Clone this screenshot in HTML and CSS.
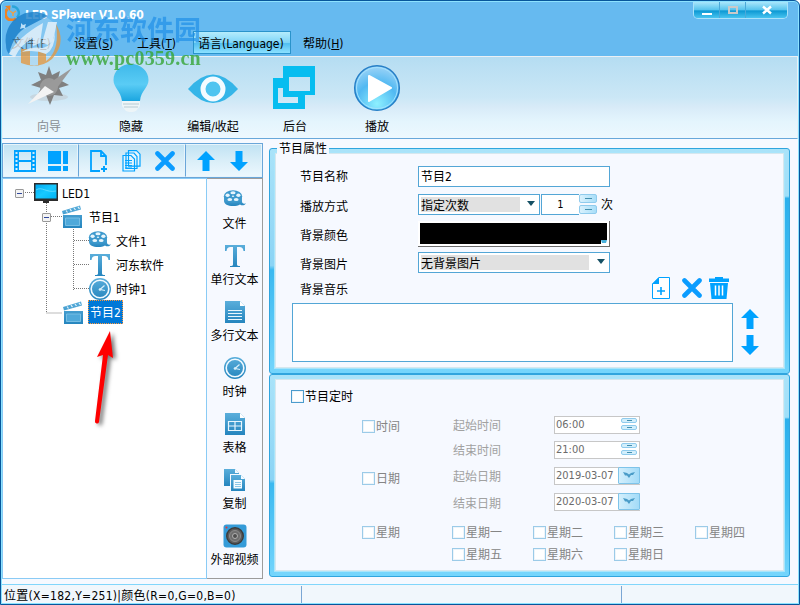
FILE: index.html
```
<!DOCTYPE html>
<html lang="zh-CN">
  <head>
    <meta charset="UTF-8"/>
    <meta name="viewport" content="width=device-width, initial-scale=1.0">
    <title>LED SPlayer V1.0.60</title>
    <link rel="stylesheet" href="styles.css">
  </head>
  <body>
    <svg class="iconDefs" width="0" height="0">
      <defs>
        <linearGradient id="blueFade" x1="0" y1="0" x2="0" y2="1">
          <stop offset="0" stop-color="#5aaedb"/>
          <stop offset="1" stop-color="#2585be"/>
        </linearGradient>
        <linearGradient id="bulbFade" x1="0" y1="0" x2="0" y2="1">
          <stop offset="0" stop-color="#3fb9ea"/>
          <stop offset="0.55" stop-color="#5accf5"/>
          <stop offset="1" stop-color="#1ba6e0"/>
        </linearGradient>
        <radialGradient id="playFade" cx="0.5" cy="0.85" r="0.85">
          <stop offset="0" stop-color="#8df0ff"/>
          <stop offset="0.55" stop-color="#51b9f2"/>
          <stop offset="1" stop-color="#9fd4f7"/>
        </radialGradient>
        <linearGradient id="screenFade" x1="0" y1="0" x2="1" y2="1">
          <stop offset="0" stop-color="#00a8f0"/>
          <stop offset="0.5" stop-color="#17c9ff"/>
          <stop offset="1" stop-color="#00b4f5"/>
        </linearGradient>
      </defs>
      <symbol id="reel" viewBox="0 0 24 22">
        <path fill="url(#blueFade)" d="M1 7v5c0 3 4 5 9 5 3 0 5-.6 7-1.600 2 1.400 4 1.400 6-.9-3 .6-4-.6-4-2V7z"/>
        <ellipse cx="10" cy="7.500" rx="9.200" ry="6.300" fill="#3d99cd"/>
        <g fill="#e8f5fc"><ellipse cx="10" cy="3.800" rx="2.600" ry="1.500"/><ellipse cx="4.600" cy="6.300" rx="2.100" ry="1.700"/><ellipse cx="15.400" cy="6.300" rx="2.100" ry="1.700"/><ellipse cx="6.800" cy="10.500" rx="2.400" ry="1.500"/><ellipse cx="13.200" cy="10.500" rx="2.400" ry="1.500"/><ellipse cx="10" cy="7.300" rx="1.200" ry=".8"/></g>
      </symbol>
      <symbol id="letterT" viewBox="0 0 24 24">
        <path fill="url(#blueFade)" d="M2 1h20v6h-1.500C20 4 19 3 16.500 3H14v17.500c0 1 1 1.500 3 1.500v1H7v-1c2 0 3-.5 3-1.500V3H7.500C5 3 4 4 3.500 7H2z"/>
      </symbol>
      <symbol id="clock" viewBox="0 0 24 24">
        <circle cx="12" cy="12" r="11" fill="url(#blueFade)"/>
        <circle cx="12" cy="12" r="8.800" fill="none" stroke="#f2faff" stroke-width="1.600"/>
        <path d="M16.500 8.500L12 12.500l5 1" fill="none" stroke="#d8effa" stroke-width="1.200"/>
        <circle cx="12" cy="12.500" r="1.300" fill="#d8effa"/>
      </symbol>
      <symbol id="clapper" viewBox="0 0 22 24">
        <path fill="url(#blueFade)" d="M1 10h19v13H1zM0 6L18 .5l1 4L1 9.500z"/>
        <path d="M4 5.500l1.500 2M8 4.200l1.500 2M12 3l1.500 2M16 1.800l1.500 2" stroke="#e4f3fb" stroke-width="1.200"/>
        <path d="M3.500 13h14v7.500h-14z" fill="#4fa9da" stroke="#84c6e8" stroke-width=".8"/>
      </symbol>
      <symbol id="doc" viewBox="0 0 24 24">
        <path fill="url(#blueFade)" d="M2 1h15l5 5v17H2z"/>
        <path fill="#fff" d="M17 1v5h5z"/>
        <path d="M5 10.500h14M5 13.500h14M5 16.500h14M5 19.500h14" stroke="#e8f6fd" stroke-width="1.200"/>
      </symbol>
      <symbol id="table" viewBox="0 0 24 24">
        <path fill="url(#blueFade)" d="M2 1h15l5 5v17H2z"/>
        <path fill="#fff" d="M17 1v5h5z"/>
        <path d="M5.500 9.500h13v9h-13zM12 9.500v9M5.500 14h13" fill="none" stroke="#e8f6fd" stroke-width="1.200"/>
      </symbol>
      <symbol id="copyDoc" viewBox="0 0 24 24">
        <path fill="url(#blueFade)" d="M1 1h11l4 4v1H7v12H1z"/>
        <path fill="url(#blueFade)" d="M8 7h10l4 4v12H8z"/>
        <path fill="#f5fbff" d="M12 1v4h4zM18 7v4h4zM10.500 12h8.500v8.500h-8.500z"/>
        <path d="M12 14.500h6M12 16.500h6M12 18.500h6" stroke="#8cc6e6"/>
      </symbol>
      <symbol id="camera" viewBox="0 0 24 24">
        <rect x=".5" y=".5" width="23" height="23" rx="3" fill="#349bd8"/>
        <circle cx="12" cy="12" r="8.300" fill="#5c5c5c" stroke="#3c3c3c" stroke-width="1.400"/>
        <circle cx="12" cy="12" r="5.500" fill="#6e6e6e" stroke="#8b8b8b"/>
        <circle cx="12" cy="12" r="2.500" fill="#4e4e4e" stroke="#b0b0b0"/>
        <circle cx="3.500" cy="3.500" r="1" fill="#e33"/>
      </symbol>
      <symbol id="cross" viewBox="0 0 20 20">
        <path d="M2.500 2.500l15 15M17.500 2.500l-15 15" stroke="#0a9cff" stroke-width="4.600" stroke-linecap="round"/>
      </symbol>
      <symbol id="arrowUp" viewBox="0 0 18 20">
        <path fill="#00a2ff" d="M9 0l9 9h-5.500v11h-7V9H0z"/>
      </symbol>
      <symbol id="arrowDown" viewBox="0 0 18 20">
        <path fill="#00a2ff" d="M9 20l9-9h-5.500V0h-7v11H0z"/>
      </symbol>
    </svg>

    <div class="window">
      <header class="titleBar">
        <svg class="appIcon" viewBox="0 0 16 16" width="16" height="16">
          <path d="M7 1.500a6.500 6.500 0 0 1 5 11" fill="none" stroke="#2aa5d8" stroke-width="2.400"/>
          <path d="M2.500 4a6.300 6.300 0 0 0 8.500 9.500" fill="none" stroke="#f08322" stroke-width="3"/>
          <path d="M0 1l5.500-.5L5 6z" fill="#f08322"/>
          <path d="M5 6l3 2 3-2M8 8v3" fill="none" stroke="#e8a24c" stroke-width="1.500"/>
        </svg>
        <h1 class="titleBar_text">LED SPlayer V1.0.60</h1>
        <div class="windowButtons">
          <span class="windowButton"><svg width="12" height="12"><path d="M1 9h10v2H1z" fill="#fff"/></svg></span>
          <span class="windowButton"><svg width="12" height="12"><path d="M2 3h8v6H2z" fill="none" stroke="#c9c9c9" stroke-width="2"/></svg></span>
          <span class="windowButton windowButton_close"><svg width="12" height="12"><path d="M2 2.500l8 7M10 2.500l-8 7" stroke="#fff" stroke-width="2.400"/></svg></span>
        </div>
      </header>

      <nav class="menuBar">
        <span class="menuItem menuItem_file">文件(<u>F</u>)</span>
        <span class="menuItem menuItem_settings">设置(<u>S</u>)</span>
        <span class="menuItem menuItem_tools">工具(<u>T</u>)</span>
        <span class="menuItem menuItem_active">语言(Language)</span>
        <span class="menuItem menuItem_help">帮助(<u>H</u>)</span>
      </nav>

      <div class="toolbar">
        <div class="toolButton toolButton_disabled">
          <svg viewBox="0 0 48 48" width="48" height="48">
            <ellipse cx="24" cy="33" rx="19" ry="4" fill="#c3ccd2" opacity=".6"/>
            <path d="M24 2l3 9 8-4-2 8 11 6-10 3 4 8-9-1-4 10-4-10-9 1 4-8-10-3 10-5-3-8 8 3z" fill="#808080"/>
            <circle cx="24" cy="23" r="9" fill="#999"/>
            <path d="M47 4L29 28l-9-6z" fill="#9a9a9a"/>
            <path d="M3 40l17-18 9 6z" fill="#f3f3f3"/>
          </svg>
          <span>向导</span>
        </div>
        <div class="toolButton">
          <svg viewBox="0 0 48 48" width="48" height="48">
            <path d="M24 0C14 0 6.500 7 6.500 16c0 8 7 10 8.500 21h18c1-11 8.500-13 8.500-21C41.500 7 34 0 24 0z" fill="url(#bulbFade)"/>
            <path d="M15 37h18v5l-4 5-3 1h-4l-3-1-4-5z" fill="#edf5f8"/>
            <path d="M16 40h16M17 43h14" stroke="#b8cbd3"/>
          </svg>
          <span>隐藏</span>
        </div>
        <div class="toolButton">
          <svg viewBox="0 0 50 48" width="50" height="48">
            <path d="M0 25Q25-4 50 25 25 53 0 25z" fill="#35b5e8"/>
            <circle cx="25" cy="25" r="10" fill="#4fc4f0" stroke="#f4fbff" stroke-width="5"/>
          </svg>
          <span>编辑/收起</span>
        </div>
        <div class="toolButton">
          <svg viewBox="0 0 48 48" width="48" height="48">
            <path fill="#06bdf0" fill-rule="evenodd" d="M12 2h32v29H34v14H2V14h10zM18 13v14h21V13zM7 24v15h20v-6H12v-9z"/>
          </svg>
          <span>后台</span>
        </div>
        <div class="toolButton">
          <svg viewBox="0 0 48 48" width="48" height="48">
            <circle cx="24" cy="24" r="22.300" fill="url(#playFade)" stroke="#267fc7" stroke-width="1.500"/>
            <circle cx="24" cy="24" r="20.500" fill="none" stroke="#a3e2ff" stroke-width="1"/>
            <path d="M16 12l22 12-22 13z" fill="#fff" stroke="#fff" stroke-linejoin="round" stroke-width="2"/>
          </svg>
          <span>播放</span>
        </div>
      </div>

      <main class="workspace">
        <section class="leftPane">
          <div class="treeTools">
            <div class="treeTools_group treeTools_views">
              <svg viewBox="0 0 22 22" width="22" height="22"><path fill="#00a2ff" fill-rule="evenodd" d="M0 0h22v22H0zM5 2v8h12V2zM5 12v8h12v-8zM1.500 2v2h2V2zM1.500 6v2h2V6zM1.500 10v2h2v-2zM1.500 14v2h2v-2zM1.500 18v2h2v-2zM18.500 2v2h2V2zM18.500 6v2h2V6zM18.500 10v2h2v-2zM18.500 14v2h2v-2zM18.500 18v2h2v-2z"/></svg>
              <svg viewBox="0 0 20 20" width="20" height="20"><path fill="#00a2ff" d="M0 0h13v13H0zM15 0h5v13h-5zM0 15h13v5H0zM15 15h5v5h-5z"/></svg>
            </div>
            <div class="treeTools_group treeTools_edit">
              <svg viewBox="0 0 18 24" width="18" height="24"><path d="M10 22H1V2h10l5 5v9M11 2v5h5" fill="none" stroke="#00a2ff" stroke-width="1.800"/><path d="M14 17v6M11 20h6" stroke="#00a2ff" stroke-width="2"/></svg>
              <svg viewBox="0 0 19 22" width="19" height="22"><g fill="#e6f5fc" stroke="#00a2ff" stroke-width="1.200"><path d="M6.500.7h8l3.500 3.500v12H6.500zM4 3h8l3 3.500v12H4zM1 5.500h8l3.500 3.500v12H1z"/><path d="M3 10.500h7M3 13h7M3 15.500h7M3 18h7"/></g></svg>
              <svg width="20" height="20"><use href="#cross"/></svg>
            </div>
            <div class="treeTools_group treeTools_move">
              <svg width="18" height="20"><use href="#arrowUp"/></svg>
              <svg width="18" height="20"><use href="#arrowDown"/></svg>
            </div>
          </div>
          <div class="leftPane_body">
            <div class="tree">
              <svg class="tree_lines" width="120" height="150">
                <path d="M22 13.500h9M43.500 22v112h15M48 37.500h12M70.500 48v64M71 61.500h15M71 85.500h15M71 109.500h15" fill="none" stroke="#777" stroke-dasharray="1 1"/>
              </svg>
              <div class="treeRow treeRow_root">
                <i class="expander"></i>
                <svg viewBox="0 0 24 20" width="24" height="20"><path fill="#2c2c2c" d="M0 0h24v18h-9v2H9v-2H0z"/><path fill="url(#screenFade)" d="M1.500 1.500h21v14h-21z"/><path d="M2 7c6-4 10 3 20 1" fill="none" stroke="#7be4ff" stroke-width=".7"/></svg>
                <span>LED1</span>
              </div>
              <div class="treeRow treeRow_program">
                <i class="expander"></i>
                <svg width="22" height="24"><use href="#clapper"/></svg>
                <span>节目1</span>
              </div>
              <div class="treeRow treeRow_item"><svg width="24" height="22"><use href="#reel"/></svg><span>文件1</span></div>
              <div class="treeRow treeRow_item"><svg width="24" height="24"><use href="#letterT"/></svg><span>河东软件</span></div>
              <div class="treeRow treeRow_item"><svg width="24" height="24"><use href="#clock"/></svg><span>时钟1</span></div>
              <div class="treeRow treeRow_last">
                <svg width="22" height="24"><use href="#clapper"/></svg>
                <span class="treeRow_selected">节目2</span>
              </div>
            </div>
            <div class="palette">
              <div class="paletteItem"><svg width="24" height="24"><use href="#reel"/></svg><span>文件</span></div>
              <div class="paletteItem"><svg width="24" height="24"><use href="#letterT"/></svg><span>单行文本</span></div>
              <div class="paletteItem"><svg width="24" height="24"><use href="#doc"/></svg><span>多行文本</span></div>
              <div class="paletteItem"><svg width="24" height="24"><use href="#clock"/></svg><span>时钟</span></div>
              <div class="paletteItem"><svg width="24" height="24"><use href="#table"/></svg><span>表格</span></div>
              <div class="paletteItem"><svg width="24" height="24"><use href="#copyDoc"/></svg><span>复制</span></div>
              <div class="paletteItem"><svg width="24" height="24"><use href="#camera"/></svg><span>外部视频</span></div>
            </div>
          </div>
        </section>

        <section class="rightPane">
          <div class="groupBox groupBox_props">
            <span class="groupBox_legend">节目属性</span>
            <div class="groupBox_inner">
              <div class="propRow">
                <label>节目名称</label>
                <div class="textField">节目2</div>
              </div>
              <div class="propRow propRow_mode">
                <label>播放方式</label>
                <div class="select select_mode"><span>指定次数</span><i class="caret"></i></div>
                <div class="countField">1</div>
                <div class="spinner"><i></i><i></i></div>
                <span class="unit">次</span>
              </div>
              <div class="propRow propRow_color">
                <label>背景颜色</label>
                <div class="colorField"><div class="colorField_swatch"><i></i></div></div>
              </div>
              <div class="propRow propRow_image">
                <label>背景图片</label>
                <div class="select"><span>无背景图片</span><i class="caret"></i></div>
              </div>
              <div class="musicHead">
                <label>背景音乐</label>
                <svg class="musicHead_add" viewBox="0 0 18 22" width="18" height="22"><path d="M7 .5h10.500v21H.5V7z" fill="#fff" stroke="#00a2ff"/><path d="M7 0v7H0z" fill="#00a2ff"/><path d="M9 10v8M5 14h8" stroke="#00a2ff" stroke-width="1.600"/></svg>
                <svg class="musicHead_remove" width="20" height="20"><use href="#cross"/></svg>
                <svg viewBox="0 0 20 22" width="20" height="22"><path fill="#00a2ff" d="M6 0h8v1.500h6V5H0V1.500h6zM1 6h18l-1.500 16h-15z"/><path d="M6.500 8.500v10M10 8.500v10M13.500 8.500v10" stroke="#fff" stroke-width="1.500"/></svg>
              </div>
              <div class="musicBody">
                <div class="musicList"></div>
                <div class="musicMove">
                  <svg width="18" height="20"><use href="#arrowUp"/></svg>
                  <svg width="18" height="20"><use href="#arrowDown"/></svg>
                </div>
              </div>
            </div>
          </div>

          <div class="groupBox groupBox_timing">
            <div class="groupBox_inner">
              <div class="check check_main"><i></i><span>节目定时</span></div>
              <div class="timeRow timeRow_first"><div class="check"><i></i><span>时间</span></div><label>起始时间</label><div class="timeField">06:00<span class="timeField_spin"><b></b><b></b></span></div></div>
              <div class="timeRow"><span></span><label>结束时间</label><div class="timeField">21:00<span class="timeField_spin"><b></b><b></b></span></div></div>
              <div class="timeRow timeRow_date"><div class="check"><i></i><span>日期</span></div><label>起始日期</label><div class="timeField timeField_date">2019-03-07<span class="dateDrop"><svg width="12" height="6"><path d="M0 0l4 1 2 1.500L8 1l4-1-2 3H8L6 6 4 3.500H2z" fill="#4a9cc8"/></svg></span></div></div>
              <div class="timeRow"><span></span><label class="label_low">结束日期</label><div class="timeField timeField_date">2020-03-07<span class="dateDrop"><svg width="12" height="6"><path d="M0 0l4 1 2 1.500L8 1l4-1-2 3H8L6 6 4 3.500H2z" fill="#4a9cc8"/></svg></span></div></div>
              <div class="weekGrid">
                <div class="check"><i></i><span>星期</span></div>
                <div class="check"><i></i><span>星期一</span></div>
                <div class="check"><i></i><span>星期二</span></div>
                <div class="check"><i></i><span>星期三</span></div>
                <div class="check"><i></i><span>星期四</span></div>
                <div class="check weekGrid_second"><i></i><span>星期五</span></div>
                <div class="check"><i></i><span>星期六</span></div>
                <div class="check"><i></i><span>星期日</span></div>
              </div>
            </div>
          </div>
        </section>
      </main>

      <footer class="statusBar">
        <span class="statusBar_position">位置(X=182,Y=251)|颜色(R=0,G=0,B=0)</span>
        <span class="statusBar_middle"></span>
        <span></span>
      </footer>

      <!-- download site mark over the title and menu -->
      <div class="siteMark">
        <svg class="siteMark_logo" viewBox="0 0 58 58" width="58" height="58">
          <circle cx="29" cy="29" r="26" fill="#a9d6f2" opacity=".55"/>
          <path d="M1 34A28 28 0 0 1 43 5L22 16Q9 22 4 43 1 40 1 34z" fill="#1b7fc9"/>
          <path d="M4 43Q13 26 38 12L35 32 28 35V27Q16 33 10 46z" fill="#f1f7fb"/>
          <path d="M43 11h9L48 30 43 34 37 32z" fill="#f1f7fb"/>
          <path d="M51 13Q62 32 47 48 34 59 16 52V38h9v17h8V37h8v13Q55 40 51 13z" fill="#e39a45"/>
          <path d="M10 46Q22 34 38 37 48 34 50 22 50 38 41 43 30 38 16 41z" fill="#f1f7fb"/>
          <path d="M16 12l2 2 3-1-1 3 1 2-3-1-3 1 1-3z" fill="#cfe9fa"/>
        </svg>
        <div class="siteMark_texts">
          <span class="siteMark_name">河东软件园</span>
          <span class="siteMark_url">www.pc0359.cn</span>
        </div>
      </div>
      <svg class="pointer" viewBox="0 0 40 104" width="40" height="104">
        <path d="M22 3l3 27-5-3-9 67a2 2 0 0 1-4-1l8-66-6 2z" fill="#fe0000"/>
      </svg>
    </div>
  </body>
</html>
```
FILE: styles.css
```
* {
  box-sizing: border-box;
}
body {
  margin: 0;
  overflow: hidden;
  background-color: #fff;
  font-family: "DejaVu Sans Condensed", "Noto Sans CJK SC", sans-serif;
  font-size: 12px;
  line-height: 16px;
  color: #000;
}
svg {
  display: block;
  flex: none;
}
label, span {
  white-space: nowrap;
}
.iconDefs {
  position: absolute;
}
.window {
  position: relative;
  display: flex;
  flex-direction: column;
  width: 800px;
  height: 605px;
  padding: 1px;
  border: 1px solid #07569b;
  border-radius: 6px 6px 0 0;
  background-color: #66baf0;
  box-shadow: inset 0 0 0 1px #8ce2ff;
}

/* title and menu */
.titleBar {
  display: flex;
  height: 28px;
  padding-left: 3px;
}
.appIcon {
  margin-top: 3px;
}
.titleBar_text {
  flex: 1;
  margin: 5px 0 0 4px;
  font-size: 12px;
  font-weight: bold;
  letter-spacing: -.25px;
  color: #fff;
}
.windowButtons {
  display: flex;
  height: 17px;
  margin-right: 10px;
  border: 1px solid #a8e2fb;
  border-top: 0;
  border-radius: 0 0 5px 5px;
  overflow: hidden;
}
.windowButton {
  display: flex;
  justify-content: center;
  align-items: center;
  width: 26px;
  border-right: 1px solid #4ba9d9;
  background: linear-gradient(#a9e6fb, #55c3ed 50%, #0c98d3 55%, #48c4f0);
}
.windowButton_close {
  width: 41px;
  border-right: 0;
}
.menuBar {
  display: flex;
  height: 26px;
  padding: 1px 0 2px 10px;
}
.menuItem {
  height: 23px;
  padding-top: 5px;
}
.menuItem_file { width: 62px; }
.menuItem_settings { width: 63px; }
.menuItem_tools { width: 56px; }
.menuItem_active {
  width: 98px;
  padding-left: 4px;
  padding-top: 4px;
  border: 1px solid #2a93cb;
  background: linear-gradient(#b5ecfc, #7ed5f8 50%, #52bff1 55%, #8be1ff);
}
.menuItem_help {
  padding-left: 12px;
}

/* main toolbar */
.toolbar {
  display: flex;
  height: 83px;
  padding: 7px 0 0 5px;
  border: 1px solid #eaf0f5;
  border-bottom-color: #68a8da;
  background: linear-gradient(#b5ddf2, #cbe7f6 50%, #d8ebf8 62%, #e4f5fd 80%, #edf8fe);
}
.toolButton {
  display: flex;
  flex-direction: column;
  align-items: center;
  gap: 7px;
  width: 82px;
}
.toolButton_disabled {
  color: #878d92;
}

/* workspace */
.workspace {
  display: flex;
  flex: 1;
  padding-top: 4px;
  background-color: #f6f9ff;
}
.leftPane {
  width: 261px;
}
.treeTools {
  display: flex;
  height: 35px;
  border: 1px solid #6aa6d9;
  background: linear-gradient(#bfe2f3, #d9eef8 50%, #edf8fe);
}
.treeTools_group {
  display: flex;
  align-items: center;
  border: 1px solid #e7f4fb;
}
.treeTools_group + .treeTools_group {
  border-left: 1px solid #6aa6d9;
}
.treeTools_views {
  width: 75px;
  gap: 12px;
  padding-left: 10px;
}
.treeTools_edit {
  width: 107px;
  gap: 14px;
  padding-left: 11px;
}
.treeTools_move {
  flex: 1;
  gap: 15px;
  padding-left: 11px;
}
.leftPane_body {
  display: flex;
  height: 401px;
}
.tree {
  position: relative;
  width: 205px;
  padding-top: 2px;
  border: 1px solid #8acbf5;
  background-color: #fff;
}
.tree_lines {
  position: absolute;
  left: 0;
  top: 0;
}
.treeRow {
  position: relative;
  display: flex;
  align-items: center;
  height: 24px;
}
.treeRow span {
  padding-top: 1px;
}
.treeRow_root {
  gap: 4px;
  padding-left: 12px;
}
.treeRow_root .expander {
  margin-right: 6px;
}
.treeRow_program {
  gap: 5px;
  padding-left: 39px;
}
.treeRow_program .expander {
  margin-right: 6px;
}
.treeRow_item {
  gap: 4px;
  padding-left: 85px;
}
.treeRow_last {
  gap: 3px;
  padding-left: 60px;
}
.treeRow .treeRow_selected {
  height: 24px;
  margin-top: -2px;
  padding: 4px 1px 0;
  border: 1px dotted #ff9a3c;
  background-color: #0078d7;
  color: #fff;
}
.expander {
  display: flex;
  justify-content: center;
  align-items: center;
  width: 9px;
  height: 9px;
  border: 1px solid #999;
  border-radius: 1px;
  background-color: #f3f3f3;
}
.expander::after {
  content: "";
  width: 5px;
  height: 1px;
  background-color: #31489c;
}
.palette {
  width: 56px;
  padding-top: 9px;
  border: 1px solid #9c9c9c;
  border-left: 0;
}
.paletteItem {
  display: flex;
  flex-direction: column;
  align-items: center;
  gap: 4px;
  height: 56px;
}

/* group boxes */
.rightPane {
  width: 521px;
  margin: 5px 0 0 6px;
}
.groupBox {
  position: relative;
  padding: 4px 5px 5px;
  border: 1px solid #30a5de;
  border-radius: 3px;
}
.groupBox_props {
  height: 226px;
  background:
    linear-gradient(#aae3f9, #9fdff9 21%, #2cb0ec 22%, #40bdf2 60%, #74d5fc) right / 6px 100% no-repeat,
    linear-gradient(#aae3f9, #8bd4f5 52%, #3bb9f0 54%, #74d5fc) left / 6px 100% no-repeat,
    linear-gradient(#aae3f9, #74d5fc);
}
.groupBox_timing {
  height: 203px;
  background:
    linear-gradient(#aae3f9, #9fdff9 21%, #2cb0ec 22%, #40bdf2 60%, #74d5fc) right / 6px 100% no-repeat,
    linear-gradient(#aae3f9, #8bd4f5 52%, #3bb9f0 54%, #74d5fc) left / 6px 100% no-repeat,
    linear-gradient(#aae3f9, #74d5fc);
}
.groupBox_inner {
  height: 100%;
  background-color: #f6f9ff;
  box-shadow: inset 0 0 0 1px #d6e7ee, 0 0 0 1px #a9e5fb;
}
.groupBox_legend {
  position: absolute;
  left: 7px;
  top: -8px;
  height: 14px;
  padding: 0 2px;
  line-height: 17px;
  background-color: #f6f9ff;
}
.groupBox_props .groupBox_inner {
  padding: 13px 0 0 17px;
}
.propRow {
  display: flex;
  height: 21px;
  padding-left: 8px;
}
.propRow label {
  width: 118px;
  padding-top: 3px;
}
.propRow_mode {
  margin: 7px 0 6px;
}
.propRow_mode label {
  padding-top: 5px;
}
.propRow_color {
  height: 26px;
}
.propRow_color label {
  padding-top: 7px;
}
.propRow_image {
  margin: 5px 0 4px;
}
.propRow_image label {
  padding-top: 5px;
}
.textField, .countField {
  width: 192px;
  padding: 2px 2px 0;
  border: 1px solid #53a6d6;
  background-color: #fff;
}
.select {
  display: flex;
  justify-content: space-between;
  width: 192px;
  padding: 2px 4px 2px 2px;
  border: 1px solid #53a6d6;
  background-color: #fff;
}
.select span {
  width: 168px;
  height: 15px;
  line-height: 18px;
  background-color: #e1e1e1;
}
.select_mode {
  width: 122px;
}
.select_mode span {
  width: 99px;
}
.caret {
  margin-top: 4px;
  border: 4px solid transparent;
  border-top: 5px solid #155064;
  border-bottom: 0;
  height: 0;
}
.countField {
  width: 38px;
  margin-left: 1px;
  padding-top: 1px;
  border-right: 0;
  font-size: 11px;
  line-height: 18px;
  text-align: center;
}
.spinner {
  display: flex;
  flex-direction: column;
  gap: 2px;
  width: 18px;
}
.spinner i {
  display: flex;
  justify-content: center;
  align-items: center;
  height: 9px;
  border: 1px solid #8fcbed;
  border-radius: 2px;
  background: linear-gradient(90deg, #d9f1fd, #a8def8);
}
.spinner i::after {
  content: "";
  width: 7px;
  height: 1px;
  background-color: #438fae;
}
.unit {
  margin: 3px 0 0 4px;
}
.colorField {
  width: 192px;
  padding: 2px 2px 1px;
  border-right: 1px solid #6b6b6b;
  border-bottom: 1px solid #6b6b6b;
  background-color: #fff;
}
.colorField_swatch {
  display: flex;
  justify-content: flex-end;
  align-items: flex-end;
  height: 21px;
  background-color: #000;
}
.colorField_swatch i {
  width: 6px;
  height: 4px;
  border: 1px solid #fff;
  border-top: 3px solid #48b0dc;
}
.musicHead {
  display: flex;
  align-items: center;
  height: 22px;
  margin-bottom: 4px;
  padding-left: 8px;
}
.musicHead label {
  padding-top: 4px;
}
.musicHead_add {
  margin-left: 304px;
}
.musicHead_remove {
  margin: 0 7px 0 12px;
}
.musicBody {
  display: flex;
  gap: 8px;
}
.musicList {
  width: 441px;
  height: 59px;
  border: 1px solid #53a6d6;
  background-color: #fff;
}
.musicMove {
  display: flex;
  flex-direction: column;
  gap: 6px;
  padding-top: 6px;
}

/* timing */
.groupBox_timing .groupBox_inner {
  padding: 9px 0 0 16px;
}
.check {
  display: flex;
  align-items: center;
  gap: 1px;
  color: #858585;
}
.check span {
  padding-top: 1px;
}
.check i {
  width: 13px;
  height: 13px;
  border: 1px solid #9bcbe8;
  background-color: #fff;
  box-shadow: inset 0 0 0 1px #edf4fa;
}
.check_main {
  height: 17px;
  margin-bottom: 7px;
  color: #000;
}
.check_main i {
  border-color: #4b9ccd;
}
.timeRow {
  display: grid;
  grid-template-columns: 91px 101px 86px;
  align-items: center;
  height: 25px;
  padding-left: 71px;
}
.timeRow label {
  padding-top: 2px;
  color: #a1a1a1;
}
.timeRow .label_low {
  padding-top: 5px;
}
.timeRow_first .check {
  padding-top: 4px;
}
.timeRow_date {
  height: 27px;
}
.timeRow_date .check {
  padding-top: 6px;
}
.timeField {
  display: flex;
  justify-content: space-between;
  height: 18px;
  padding-left: 1px;
  border: 1px solid #c7c7c7;
  background-color: #fff;
  font-size: 11px;
  color: #6b6b6b;
}
.timeField_spin {
  display: flex;
  flex-direction: column;
  gap: 2px;
  width: 16px;
  margin: 1px 2px 0 0;
}
.timeField_spin b {
  display: flex;
  justify-content: center;
  align-items: center;
  height: 5px;
  border: 1px solid #8fcbed;
  border-radius: 2px;
  background-color: #d3effc;
}
.timeField_spin b::after {
  content: "";
  width: 5px;
  height: 1px;
  background-color: #438fae;
}
.timeField_date {
  border-right: 0;
}
.dateDrop {
  display: flex;
  justify-content: center;
  align-items: center;
  width: 22px;
  height: 17px;
  margin-top: -1px;
  border: 1px solid #7ec4ea;
  border-radius: 1px;
  background: linear-gradient(90deg, #d3effc, #a3dbf8);
}
.weekGrid {
  display: grid;
  grid-template-columns: 90px 81px 81px 81px 81px;
  grid-auto-rows: 22px;
  padding: 7px 0 0 71px;
}
.weekGrid_second {
  grid-column-start: 2;
}

/* status bar */
.statusBar {
  display: flex;
  height: 19px;
  border-top: 1px solid #82d6fb;
  background-color: #f1f7fc;
}
.statusBar_position {
  width: 299px;
  padding: 3px 0 0 2px;
  letter-spacing: .28px;
}
.statusBar_middle {
  width: 321px;
  margin-top: 1px;
  border: 1px solid #7aa6d4;
  border-width: 0 1px;
}

/* things lying over the window */
.siteMark {
  position: absolute;
  left: 4px;
  top: 10px;
  display: flex;
  gap: 3px;
  opacity: .8;
}
.siteMark_texts {
  display: flex;
  flex-direction: column;
  padding-top: 3px;
}
.siteMark_name {
  height: 32px;
  font-size: 27px;
  line-height: 34px;
  font-weight: bold;
  color: #1e8fe8;
  opacity: .85;
}
.siteMark_url {
  font-family: "Liberation Serif", serif;
  font-size: 20px;
  line-height: 24px;
  font-weight: bold;
  letter-spacing: .2px;
  color: #36a536;
}
.pointer {
  position: absolute;
  left: 87px;
  top: 327px;
  filter: drop-shadow(3px 2px 2px rgba(0, 0, 0, .55));
}
```
